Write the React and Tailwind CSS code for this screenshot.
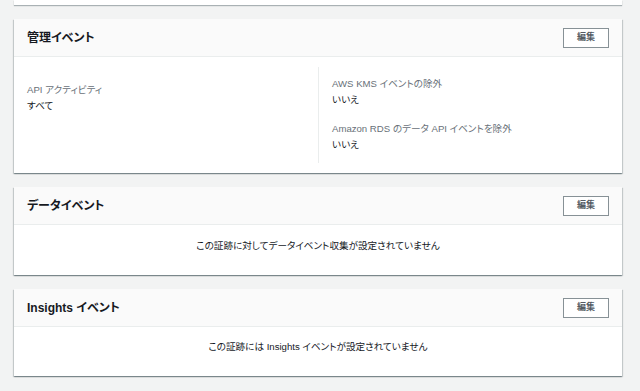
const font = "font-['Liberation_Sans','Noto_Sans_CJK_JP',sans-serif] [font-feature-settings:'palt']";

function EditButton() {
  return (
    <button
      type="button"
      className="h-[20px] w-[46px] border border-[#879196] bg-white text-[9px] font-bold text-[#545b64] leading-none"
    >
      編集
    </button>
  );
}

function Card({ title, children }) {
  return (
    <div className="bg-white shadow-[0_1px_1px_0_rgba(0,28,36,0.3),1px_1px_1px_0_rgba(0,28,36,0.15),-1px_1px_1px_0_rgba(0,28,36,0.15)]">
      <div className="flex h-[38px] items-center justify-between border-b border-[#eaeded] bg-[#fafafa] pl-[13px] pr-[13px]">
        <h2 className="text-[12px] font-bold text-[#16191f]">{title}</h2>
        <EditButton />
      </div>
      {children}
    </div>
  );
}

function Field({ label, value }) {
  return (
    <div className="flex flex-col gap-[4px]">
      <span className="text-[9.6px] leading-[12px] text-[#687078]">{label}</span>
      <span className="text-[9.6px] leading-[12px] text-[#16191f]">{value}</span>
    </div>
  );
}

export default function App() {
  return (
    <div className={`min-h-[391px] w-[640px] bg-[#f2f3f3] pl-[14px] pr-[18px] ${font}`}>
      <div className="flex flex-col gap-[14px]">
        <div className="h-[5px] bg-white shadow-[0_1px_1px_0_rgba(0,28,36,0.3)]" />

        <Card title="管理イベント">
          <div className="grid h-[116px] grid-cols-2 py-[10px]">
            <div className="pl-[13px] pt-[17px]">
              <Field label="API アクティビティ" value="すべて" />
            </div>
            <div className="flex flex-col gap-[17px] border-l border-[#eaeded] pl-[13px] pt-[11px]">
              <Field label="AWS KMS イベントの除外" value="いいえ" />
              <Field label="Amazon RDS のデータ API イベントを除外" value="いいえ" />
            </div>
          </div>
        </Card>

        <Card title="データイベント">
          <div className="flex h-[50px] items-start justify-center pt-[15px] text-[9.6px] leading-[12px] text-[#16191f]">
            この証跡に対してデータイベント収集が設定されていません
          </div>
        </Card>

        <Card title="Insights イベント">
          <div className="flex h-[49px] items-start justify-center pt-[14px] text-[9.6px] leading-[12px] text-[#16191f]">
            この証跡には Insights イベントが設定されていません
          </div>
        </Card>
      </div>
    </div>
  );
}
